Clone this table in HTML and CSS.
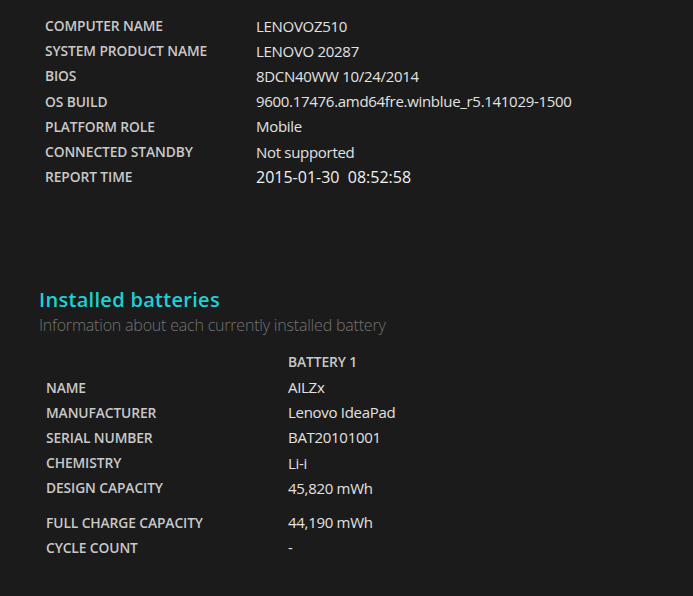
FILE: index.html
```html
<!DOCTYPE html>
<html>
<head>
<meta charset="utf-8">
<link rel="stylesheet" href="styles.css">
</head>
<body>
<div class="page">
  <div class="sys">
    <div class="lbl">COMPUTER NAME</div><div class="val">LENOVOZ510</div>
    <div class="lbl">SYSTEM PRODUCT NAME</div><div class="val">LENOVO 20287</div>
    <div class="lbl">BIOS</div><div class="val">8DCN40WW 10/24/2014</div>
    <div class="lbl">OS BUILD</div><div class="val">9600.17476.amd64fre.winblue_r5.141029-1500</div>
    <div class="lbl">PLATFORM ROLE</div><div class="val">Mobile</div>
    <div class="lbl">CONNECTED STANDBY</div><div class="val">Not supported</div>
    <div class="lbl">REPORT TIME</div><div class="val strong">2015-01-30&nbsp; 08:52:58</div>
  </div>

  <div class="section">
    <h2 class="title">Installed batteries</h2>
    <div class="subtitle">Information about each currently installed battery</div>
  </div>

  <div class="bat">
    <div class="lbl"></div><div class="lbl head">BATTERY 1</div>
    <div class="lbl">NAME</div><div class="val">AILZx</div>
    <div class="lbl">MANUFACTURER</div><div class="val">Lenovo IdeaPad</div>
    <div class="lbl">SERIAL NUMBER</div><div class="val">BAT20101001</div>
    <div class="lbl">CHEMISTRY</div><div class="val">Li-i</div>
    <div class="lbl">DESIGN CAPACITY</div><div class="val">45,820 mWh</div>
    <div class="spacer"></div><div class="spacer"></div>
    <div class="lbl">FULL CHARGE CAPACITY</div><div class="val">44,190 mWh</div>
    <div class="lbl">CYCLE COUNT</div><div class="val">-</div>
  </div>
</div>
</body>
</html>
```

FILE: styles.css
```css
html, body {
  margin: 0;
  padding: 0;
  background: #1b1b1b;
}
body {
  font-family: "Open Sans", "Noto Sans", "Liberation Sans", sans-serif;
  width: 693px;
  height: 596px;
  overflow: hidden;
}
.page {
  display: flex;
  flex-direction: column;
}
.sys {
  display: grid;
  grid-template-columns: 211px auto;
  grid-auto-rows: 25.2px;
  padding: 13px 0 0 45px;
  align-items: center;
}
.lbl {
  color: #c9c9c9;
  font-weight: 600;
  font-size: 13.8px;
  letter-spacing: -0.1px;
  white-space: nowrap;
}
.val {
  color: #e2e2e2;
  font-weight: 400;
  font-size: 15px;
  letter-spacing: -0.3px;
  white-space: nowrap;
}
.val.strong {
  font-weight: 500;
  font-size: 16px;
  letter-spacing: 0;
  color: #f0f0f0;
}
.section {
  padding: 98px 0 0 39px;
}
.title {
  margin: 0;
  color: #1dd0d6;
  font-weight: 600;
  font-size: 20px;
  line-height: 26px;
  letter-spacing: 0.3px;
}
.subtitle {
  color: #737373;
  font-weight: 300;
  font-size: 16px;
  line-height: 24px;
  letter-spacing: -0.2px;
}
.bat {
  display: grid;
  grid-template-columns: 242px auto;
  grid-template-rows: repeat(6, 25.2px) 9px repeat(2, 25.2px);
  padding: 12px 0 0 46px;
  align-items: center;
}
.bat .spacer {
  height: 9px;
}
```
